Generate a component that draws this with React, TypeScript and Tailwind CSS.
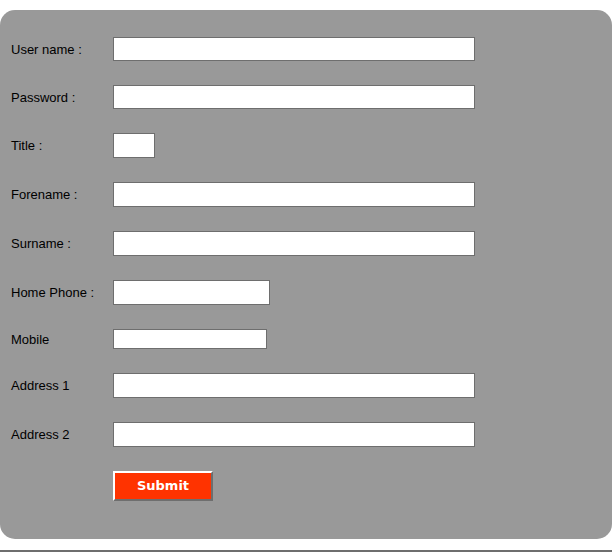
import React from "react";

const rows: { label: string; w: string; h: string }[] = [
  { label: "User name :", w: "w-[362px]", h: "h-[24px]" },
  { label: "Password :", w: "w-[362px]", h: "h-[24px]" },
  { label: "Title :", w: "w-[42px]", h: "h-[25px]" },
  { label: "Forename :", w: "w-[362px]", h: "h-[25px]" },
  { label: "Surname :", w: "w-[362px]", h: "h-[25px]" },
  { label: "Home Phone :", w: "w-[157px]", h: "h-[25px]" },
  { label: "Mobile", w: "w-[154px]", h: "h-[20px]" },
  { label: "Address 1", w: "w-[362px]", h: "h-[25px]" },
  { label: "Address 2", w: "w-[362px]", h: "h-[25px]" },
];

export default function App() {
  return (
    <div className="w-[612px] h-[552px] bg-white pt-[10px] font-['Liberation_Sans',Arial,sans-serif] overflow-hidden">
      <div className="w-[612px] h-[529px] bg-[#999999] rounded-[15px] pt-[27px] pl-[11px] flex flex-col gap-[24px]">
        {rows.map((r) => (
          <div key={r.label} className="flex items-center">
            <span className="w-[102px] text-[13px] text-black leading-none">{r.label}</span>
            <input
              type="text"
              className={`${r.w} ${r.h} bg-white border border-[#6e6e6e] outline-none`}
            />
          </div>
        ))}
        <div className="flex">
          <div className="w-[102px]" />
          <button className="w-[100px] h-[30px] bg-[#ff3300] text-white font-bold text-[13px] font-['DejaVu_Sans',Verdana,sans-serif] border-2 border-t-white border-l-white border-b-[#6e6e6e] border-r-[#6e6e6e]">
            Submit
          </button>
        </div>
      </div>
      <div className="mt-[11px] border-t-2 border-[#6e6e6e]" />
    </div>
  );
}
